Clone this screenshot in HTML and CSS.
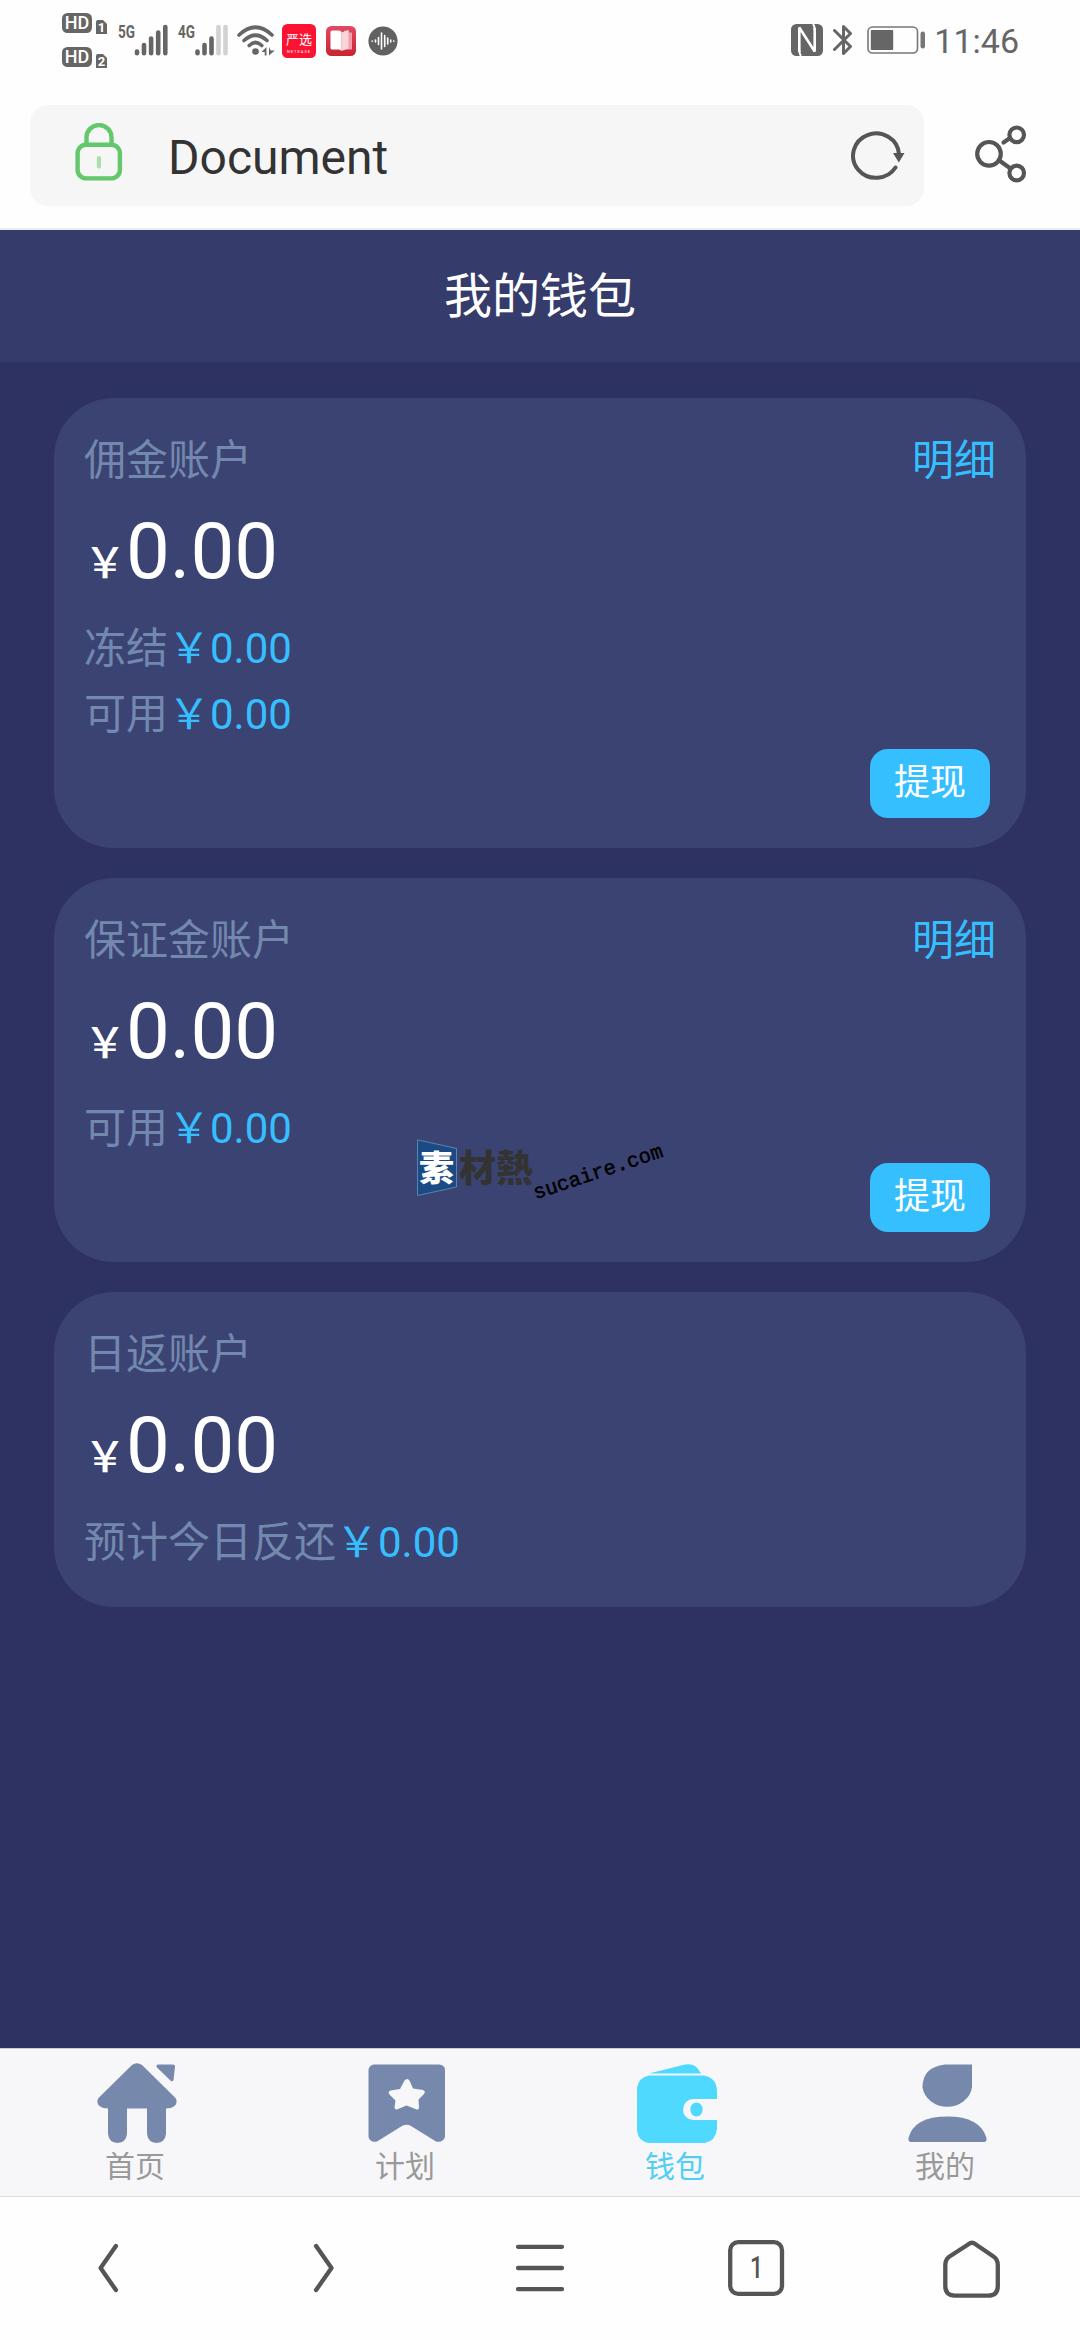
FILE: index.html
```html
<!DOCTYPE html>
<html lang="zh-CN">
<head>
<meta charset="utf-8">
<title>Document</title>
<link rel="stylesheet" href="styles.css">
</head>
<body>
<div class="screen">
  <header class="status">
    <div class="status-left">
      <svg class="i-hd" width="46" height="60" viewBox="0 0 46 60">
        <rect x="0" y="0" width="30" height="20" rx="5.500" fill="#666"/>
        <text x="15" y="16.200" text-anchor="middle" class="hd">HD</text>
        <path d="M36 7h5l4 4v10H34V9a2 2 0 0 1 2-2z" fill="#666"/>
        <text x="39.500" y="19" text-anchor="middle" class="sim">1</text>
        <rect x="0" y="34" width="30" height="20" rx="5.500" fill="#666"/>
        <text x="15" y="50.200" text-anchor="middle" class="hd">HD</text>
        <path d="M36 41h5l4 4v10H34V43a2 2 0 0 1 2-2z" fill="#666"/>
        <text x="39.500" y="53" text-anchor="middle" class="sim">2</text>
      </svg>
      <svg class="i-sig" width="50" height="42" viewBox="0 -8 50 42">
        <text x="0" y="15" textLength="17" lengthAdjust="spacingAndGlyphs" class="net">5G</text>
        <g stroke="#666" stroke-width="4.600" stroke-linecap="round"><path d="M19 28.500v1.800M26 22v8.300M33.100 15.500v14.800M40.200 9.500v20.800M47.300 4v26.300"/></g>
      </svg>
      <svg class="i-sig" width="50" height="42" viewBox="0 -8 50 42">
        <text x="0" y="15" textLength="17" lengthAdjust="spacingAndGlyphs" class="net">4G</text>
        <g stroke-width="4.600" stroke-linecap="round"><path stroke="#666" d="M19.500 28.500v1.800M26.500 22v8.300M33.500 15.500v14.800"/><path stroke="#d2d2d2" d="M40.500 4v26.300M47.500 4v26.300"/></g>
      </svg>
      <svg class="i-wifi" width="38" height="32" viewBox="0 0 38 32">
        <g fill="none" stroke="#666" stroke-width="3.600" stroke-linecap="round"><path d="M2 10Q18.500-5.500 35 10M7 15.500Q18.500 5 30 15.500M12.200 20.500Q18.500 14.500 24.800 20.500"/></g>
        <circle cx="18.500" cy="26.500" r="3.300" fill="#666"/>
        <path d="M29.500 22v8.500h-1.800v-3.600H24.500zM32 30.500V22l1.800 3.600h4z" fill="#666"/>
      </svg>
      <svg class="i-yx" width="34" height="34" viewBox="0 0 34 34">
        <rect width="34" height="34" rx="5.500" fill="#fa1432"/>
        <text x="17" y="20" text-anchor="middle" class="yx">严选</text>
        <text x="17" y="28.500" text-anchor="middle" class="yxs">NETEASE</text>
      </svg>
      <svg class="i-book" width="30" height="30" viewBox="0 0 30 30">
        <defs><linearGradient id="bk" x1="0" y1="0" x2="0" y2="1"><stop offset="0" stop-color="#e04a66"/><stop offset="1" stop-color="#c9242f"/></linearGradient></defs>
        <rect width="30" height="30" rx="5.500" fill="url(#bk)"/>
        <path d="M18 4.500h5v18h-5z" fill="#e98a9a"/><path d="M20 6.500h6v17h-6z" fill="#ef9eac"/>
        <path d="M15.500 6.500L22.500 4v18.500l-7 2.500z" fill="#f9d5db"/>
        <path d="M4.500 6q0-1.500 1.500-1.500h7q2.500 0 2.500 2V25q-.5-1.500-3-1.500H6q-1.500 0-1.500-1.500z" fill="#fff"/>
      </svg>
      <svg class="i-wave" width="30" height="30" viewBox="0 0 30 30">
        <circle cx="15" cy="15" r="14.600" fill="#616161"/>
        <path stroke="#fff" stroke-width="1.600" stroke-linecap="round" d="M4.200 15v.2M7.500 14v2M10.500 11.500v7M13.500 7v16M16.700 9.500v11M19.700 12v6M22.700 14v2M25.800 15v.2"/>
      </svg>
    </div>
    <div class="status-right">
      <svg width="32" height="32" viewBox="0 0 32 32">
        <rect width="32" height="32" rx="5.500" fill="#666"/>
        <path d="M8.300 28V3.500L23.700 27.500V4" fill="none" stroke="#fff" stroke-width="2.600" stroke-linejoin="bevel"/>
        <path d="M8.300 26Q8.300 30 10 32M23.700 6Q23.700 2 22 0" fill="none" stroke="#fff" stroke-width="2"/>
      </svg>
      <svg class="i-bt" width="20" height="32" viewBox="0 0 20 32">
        <path d="M1.500 6.500L17.500 22.500 10.500 29.500V2.500L17.500 9.500 1.500 25.500" fill="none" stroke="#666" stroke-width="3" stroke-linejoin="round" stroke-linecap="round"/>
      </svg>
      <svg class="i-bat" width="59" height="28" viewBox="0 0 59 28">
        <rect x="1" y="1" width="49.500" height="26" rx="4.500" fill="none" stroke="#777" stroke-width="1.600"/>
        <rect x="3.800" y="4" width="22.400" height="20" rx="1" fill="#666"/>
        <rect x="53.500" y="5.500" width="4.500" height="17" rx="2.200" fill="#777"/>
      </svg>
      <span class="clock">11:46</span>
    </div>
  </header>

  <div class="address">
    <div class="url">
      <svg class="i-lock" width="48" height="58" viewBox="0 0 48 58">
        <g fill="none" stroke="#62c86b" stroke-width="4.400"><path d="M11.500 21V14.500a12 12 0 0 1 25 0V21"/><rect x="2.600" y="21.800" width="42.300" height="33.600" rx="8.500"/></g>
        <path d="M23.900 35v8.500" stroke="#a9dfae" stroke-width="4.200" stroke-linecap="round"/>
      </svg>
      <span class="url-text">Document</span>
      <svg class="i-reload" width="56" height="52" viewBox="0 0 56 52">
        <path d="M45.500 38.500A23 22.200 0 1 1 49 25" fill="none" stroke="#555" stroke-width="4" stroke-linecap="round"/>
        <path d="M43 24h11.500l-5.700 9.500z" fill="#555"/>
      </svg>
    </div>
    <svg class="i-share" width="52" height="58" viewBox="0 0 52 58">
      <g fill="none" stroke="#555" stroke-width="4.200" stroke-linecap="round"><circle cx="14" cy="28.800" r="11.800"/><circle cx="41.700" cy="9.800" r="7.300"/><circle cx="41.700" cy="48" r="7.300"/><path d="M28.500 17.500L35 13M25 36L35.500 43.500"/></g>
    </svg>
  </div>

  <h1 class="title">我的钱包</h1>

  <main class="wallet">
    <section class="card">
      <div class="card-head"><span>佣金账户</span><a class="link">明细</a></div>
      <div class="total"><span class="yen">￥</span>0.00</div>
      <div class="line">冻结<span class="money">￥0.00</span></div>
      <div class="line">可用<span class="money">￥0.00</span></div>
      <div class="btn">提现</div>
    </section>
    <section class="card">
      <div class="card-head"><span>保证金账户</span><a class="link">明细</a></div>
      <div class="total"><span class="yen">￥</span>0.00</div>
      <div class="line">可用<span class="money">￥0.00</span></div>
      <div class="btn">提现</div>
      <div class="mark">
        <svg width="40" height="58" viewBox="0 0 40 58"><path d="M.5.800L39.500 9.500V48L.5 56.500z" fill="#1b4b85" stroke="#5c83ad"/></svg>
        <span class="mark-a">素</span><span class="mark-b">材熱</span><span class="mark-c">sucaire.com</span>
      </div>
    </section>
    <section class="card">
      <div class="card-head"><span>日返账户</span></div>
      <div class="total"><span class="yen">￥</span>0.00</div>
      <div class="line">预计今日反还<span class="money">￥0.00</span></div>
    </section>
  </main>

  <nav class="tabs">
    <div class="tab">
      <svg width="80" height="80" viewBox="0 0 80 80" fill="#7689ac"><path d="M35 2Q40-1.500 45 2L78.500 35Q81 39 78 42.500 75 45.500 69 45.500V71Q68 79.500 59.500 80 51 79.500 50 71V45.500H30V71Q29 79.500 20.500 80 12 79.500 11 71V45.500Q5 45.500 2 42.500-1 39 1.500 35z"/><path d="M61 1.500h15q2 0 2 2L76.500 17q-.5 2-2.500 1L60 4.500Q58.500 2 61 1.500z"/></svg>
      <span>首页</span>
    </div>
    <div class="tab">
      <svg width="80" height="80" viewBox="0 0 80 80" fill="#7689ac"><path fill-rule="evenodd" d="M7 1.500H72Q78 2 78 7V74Q76 80 69 78.500L44 63Q39.500 60.500 35 63L10 78.500Q3 80 1.500 74V7Q2 2 7 1.500zM37.500 17.500L33 26 23.500 27.500Q20.500 28.500 22.500 31.500L28.500 37.500 27.500 44.500Q28 47.500 31 46L39.500 42.500 48.500 46Q52 47.500 52 44.500L51.500 36.500 57 31Q59 28 56 27L46 25.500 42.500 17.500Q40 14.500 37.500 17.500z"/></svg>
      <span>计划</span>
    </div>
    <div class="tab active">
      <svg width="80" height="80" viewBox="0 0 80 80" fill="#4fd9ff"><path d="M12 10.500L48 1.500Q59-.5 64 10.500z"/><path d="M12 12.500H66Q79 14 80 27V36H56.500A10.500 10.500 0 0 0 56.500 57H80V66Q78.500 78 68 80H12Q1.500 78.500 0 68V25Q1.500 14.500 12 12.500z"/><ellipse cx="59.500" cy="46.500" rx="6.200" ry="7"/></svg>
      <span>钱包</span>
    </div>
    <div class="tab">
      <svg width="80" height="80" viewBox="0 0 80 80" fill="#7689ac"><path d="M38 1.500H65V24.500A25 22.500 0 0 1 15.500 24.500Q15.500 4 38 1.500z"/><path d="M3.500 79Q1 78.500 1.500 75 7 53.500 40.500 53.500 73 53.500 79.500 75 80 79 77 79z"/></svg>
      <span>我的</span>
    </div>
  </nav>

  <footer class="browser">
    <div class="key"><svg width="60" height="60" viewBox="0 0 60 60"><path d="M37.900 8L22.600 30 37.900 52"/></svg></div>
    <div class="key"><svg width="60" height="60" viewBox="0 0 60 60"><path d="M22.100 8L37.500 30 22.100 52"/></svg></div>
    <div class="key"><svg width="60" height="60" viewBox="0 0 60 60"><path d="M8 8.800H52M8 30H52M8 51.200H52"/></svg></div>
    <div class="key"><svg width="60" height="60" viewBox="0 0 60 60"><rect x="4.200" y="4.200" width="51.800" height="51.600" rx="8"/><text x="30.500" y="40" text-anchor="middle" textLength="13" lengthAdjust="spacingAndGlyphs" class="count">1</text></svg></div>
    <div class="key"><svg width="60" height="60" viewBox="0 0 60 60"><path d="M26.500 6.200Q30 3.200 33.500 6.200L51.500 18.500Q55.800 21.500 55.800 27V48Q55.800 57.700 46 57.700H13Q3.300 57.700 3.300 48V27Q3.300 21.500 7.500 18.500z"/></svg></div>
  </footer>
</div>
</body>
</html>
```
FILE: styles.css
```css
* { box-sizing: border-box; }
body { margin: 0; font-family: Roboto, "Noto Sans CJK SC", sans-serif; }
svg { display: block; flex: none; }
.screen { width: 1080px; height: 2340px; display: flex; flex-direction: column; background: #2d3263; overflow: hidden; }

.status { height: 90px; flex: none; background: #fefefe; display: flex; justify-content: space-between; padding: 13px 61px 0 62px; }
.status-left, .status-right { display: flex; align-items: flex-start; }
.i-sig { margin: 2px 0 0 10px; }
.i-wifi { margin: 12px 0 0 9px; }
.i-yx { margin: 11px 0 0 7px; }
.i-book { margin: 13px 0 0 10px; }
.i-wave { margin: 13px 0 0 12px; }
.hd { font: 500 18px Roboto, sans-serif; fill: #fff; }
.sim { font: 700 13px Roboto, sans-serif; fill: #fff; }
.net { font: 700 18px Roboto, sans-serif; fill: #666; }
.yx { font: 400 13px "Noto Sans CJK SC", sans-serif; fill: #fff; }
.yxs { font: 400 4px Roboto, sans-serif; letter-spacing: 1px; fill: #fff; }
.status-right { padding-top: 11px; }
.i-bt { margin-left: 10px; }
.i-bat { margin: 2px 0 0 14px; }
.clock { margin-left: 8px; font-size: 34px; line-height: 34px; color: #666; }

.address { height: 140px; flex: none; background: #fefefe; border-bottom: 2px solid #ececf0; display: flex; align-items: flex-start; padding: 15px 0 0 30px; }
.url { width: 894px; height: 101px; background: #f6f6f6; border-radius: 18px; display: flex; align-items: flex-start; padding: 18px 18px 0 45px; }
.url-text { flex: 1; margin: 5px 0 0 45px; font-size: 48px; line-height: 60px; color: #333; }
.i-reload { margin-top: 6px; }
.i-share { margin: 20px 0 0 51px; }

.title { margin: 0; height: 132px; flex: none; background: #353c6c; color: #fff; font-size: 48px; font-weight: 400; line-height: 134px; text-align: center; }

.wallet { flex: 1; display: flex; flex-direction: column; gap: 30px; padding: 36px 54px 0; }
.card { position: relative; background: #3b4373; border-radius: 60px; padding: 30px; display: flex; flex-direction: column; font-size: 42px; color: #7388ad; }
.card-head { height: 60px; display: flex; justify-content: space-between; line-height: 65px; }
.link, .money { color: #36bfff; }
.total { height: 129px; line-height: 127px; font-size: 78px; color: #fff; white-space: nowrap; }
.yen { font-size: 42px; font-weight: 500; }
.line { height: 66px; line-height: 63px; white-space: nowrap; }
.btn { align-self: flex-end; margin-right: 6px; width: 120px; height: 69px; border-radius: 18px; background: #36bfff; color: #fff; font-size: 36px; line-height: 69px; text-align: center; }

.mark { position: absolute; left: 363px; top: 261px; width: 260px; height: 70px; line-height: 40px; font-weight: 900; }
.mark span { position: absolute; white-space: nowrap; }
.mark-a { left: 2px; top: 11px; font-size: 35px; color: #fff; }
.mark-b { left: 42px; top: 11px; font-size: 37px; color: #333; }
.mark-c { left: 121px; top: 43px; font: 400 20.500px/24px "Liberation Mono", monospace; color: #000; -webkit-text-stroke: .5px #000; transform-origin: 0 100%; transform: rotate(-18.500deg); }

.tabs { height: 149px; flex: none; background: #f7f7fa; border-top: 1px solid #c9cad6; border-bottom: 1px solid #dcdcdc; display: flex; }
.tab { width: 270px; display: flex; flex-direction: column; align-items: center; padding-top: 14px; font-size: 30px; line-height: 47px; color: #999; }
.tab svg { margin-left: 3px; }
.tab.active { color: #4fcff5; }

.browser { height: 143px; flex: none; background: #fefefe; display: flex; align-items: flex-start; padding-top: 41px; }
.key { width: 216px; display: flex; justify-content: center; }
.key svg { fill: none; stroke: #555; stroke-width: 4.300px; stroke-linecap: round; stroke-linejoin: round; }
.key .count { font: 500 31px Roboto, sans-serif; fill: #555; stroke: none; }
```
